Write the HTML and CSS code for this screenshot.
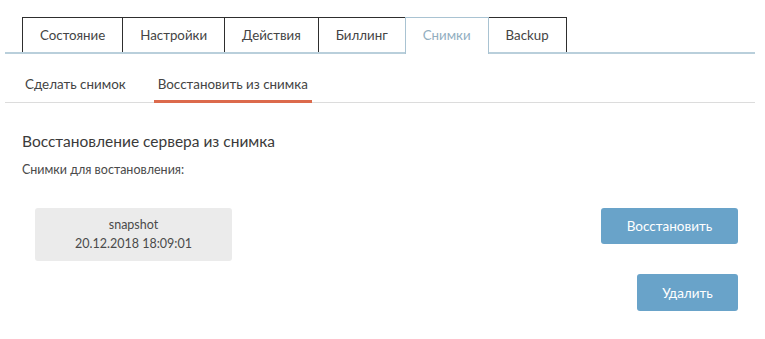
FILE: index.html
```html
<!DOCTYPE html>
<html lang="ru">
<head>
  <meta charset="UTF-8">
  <title>Снимки</title>
  <link rel="stylesheet" href="styles.css">
</head>
<body>
  <div class="tabs">
    <div class="tab">Состояние</div>
    <div class="tab">Настройки</div>
    <div class="tab">Действия</div>
    <div class="tab">Биллинг</div>
    <div class="tab active">Снимки</div>
    <div class="tab">Backup</div>
  </div>

  <div class="subtabs">
    <div class="subtab">Сделать снимок</div>
    <div class="subtab current">Восстановить из снимка</div>
  </div>

  <div class="content">
    <h2 class="title">Восстановление сервера из снимка</h2>
    <p class="hint">Снимки для востановления:</p>

    <div class="restore">
      <div class="snap">
        <div class="snap-name">snapshot</div>
        <div class="snap-date">20.12.2018 18:09:01</div>
      </div>
      <div class="actions">
        <button class="btn btn-restore">Восстановить</button>
        <button class="btn btn-delete">Удалить</button>
      </div>
    </div>
  </div>
</body>
</html>
```

FILE: styles.css
```css
body {
  margin: 0;
  background: #fff;
  font-family: Lato, "Open Sans", sans-serif;
  color: #333;
}
.tabs {
  display: flex;
  margin: 17px 10px 0 5px;
  padding-left: 17px;
  border-bottom: 2px solid #b9cfdb;
}
.tab {
  height: 34px;
  line-height: 34px;
  padding: 0 17px;
  font-size: 13.3px;
  color: #444;
  border: 1px solid #2e2e2e;
  border-bottom: none;
  margin-right: -1px;
}
.tab.active {
  color: #92aebf;
  border-color: #a9c3d2;
  margin-bottom: -2px;
  height: 36px;
  background: #fff;
  position: relative;
}
.subtabs {
  display: flex;
  margin: 0 10px 0 5px;
  padding: 0 0 0 16px;
  border-bottom: 1px solid #dcdcdc;
}
.subtab {
  padding: 22px 4px 8px;
  margin-right: 24px;
  font-size: 13.4px;
  color: #444;
  border-bottom: 3px solid transparent;
  margin-bottom: -1px;
}
.subtab.current {
  border-bottom-color: #dc6a4c;
}
.content {
  padding: 0 27px 0 22px;
}
.title {
  margin: 29px 0 0;
  font-size: 15.5px;
  font-weight: normal;
  color: #3a3a3a;
}
.hint {
  margin: 12px 0 0;
  font-size: 12.5px;
  color: #4a4a4a;
}
.restore {
  display: flex;
  justify-content: space-between;
  align-items: flex-start;
  margin-top: 31px;
}
.snap {
  width: 197px;
  height: 53px;
  margin-left: 13px;
  background: #ebebeb;
  border-radius: 3px;
  display: flex;
  flex-direction: column;
  justify-content: center;
  align-items: center;
  gap: 4px;
  padding-bottom: 2px;
  box-sizing: border-box;
  font-size: 12.5px;
  color: #4a4a4a;
}
.actions {
  display: flex;
  flex-direction: column;
  align-items: flex-end;
  gap: 30px;
}
.btn {
  border: none;
  border-radius: 3px;
  background: #69a3c9;
  color: #fff;
  font-family: inherit;
  font-size: 13.5px;
  height: 36px;
}
.btn-restore {
  width: 137px;
}
.btn-delete {
  width: 101px;
  height: 37px;
}
```
